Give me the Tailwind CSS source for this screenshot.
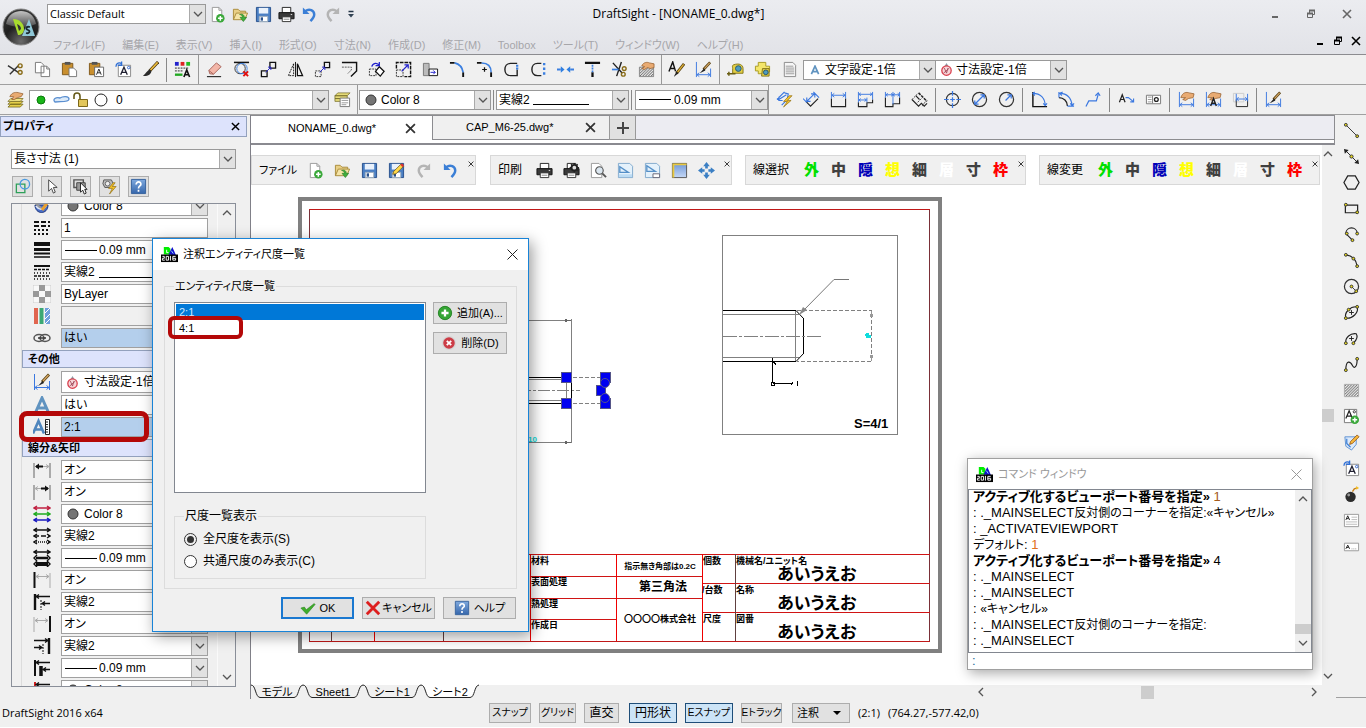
<!DOCTYPE html>
<html lang="ja">
<head>
    <meta charset="UTF-8">
    <meta name="viewport" content="width=device-width, initial-scale=1.0">
    <title>DraftSight - [NONAME_0.dwg*]</title>
    <script src="https://cdn.jsdelivr.net/npm/@tailwindcss/browser@4"></script>
</head>
<body class="bg-[#f0f0f0] font-['Liberation_Sans','Noto_Sans_CJK_JP',sans-serif] text-xs text-black [font-feature-settings:'palt']">

<!-- Icon sprite -->
<svg class="absolute size-0" aria-hidden="true">
    <defs>
        <linearGradient id="gBlue" x2="0" y2="1"><stop offset="0" stop-color="#7fa9de"/><stop offset="1" stop-color="#3566ab"/></linearGradient>
        <linearGradient id="gSky" x2="0" y2="1"><stop offset="0" stop-color="#6f97d8"/><stop offset="1" stop-color="#c5d8f5"/></linearGradient>
        <radialGradient id="gOrb" cx=".5" cy=".9" r=".9"><stop offset="0" stop-color="#6b6b6b"/><stop offset=".5" stop-color="#1f1f1f"/><stop offset="1" stop-color="#3a3a3a"/></radialGradient>
        <linearGradient id="gShine" x2="0" y2="1"><stop offset="0" stop-color="#c4c4c4"/><stop offset="1" stop-color="#4a4a4a"/></linearGradient>
        <pattern id="pHatch" width="3" height="3" patternUnits="userSpaceOnUse"><path d="M0 3L3 0" stroke="#444"/></pattern>
    </defs>
    <symbol id="chev" viewBox="0 0 10 10"><path d="M1 3l4 4 4-4" fill="none" stroke="#555" stroke-width="1.3"/></symbol>
    <symbol id="x" viewBox="0 0 10 10"><path d="M1 1l8 8M9 1l-8 8" fill="none" stroke="currentColor" stroke-width="1.6"/></symbol>
    <symbol id="min" viewBox="0 0 10 10"><path d="M2 8h6" stroke="currentColor" stroke-width="2"/></symbol>
    <symbol id="restore" viewBox="0 0 10 10"><path d="M1.500 4.500h5v4h-5zM3.500 4V1.500h5v4H7" fill="none" stroke="currentColor"/><path d="M1 4.500h6M3 1.500h6" stroke="currentColor" stroke-width="2"/></symbol>
    <symbol id="orb" viewBox="0 0 38 38"><circle cx="19" cy="19" r="18" fill="url(#gOrb)" stroke="#888"/><path d="M4 16C6 6 13 3 19 3s13 3 15 13c-9 4-21 4-30 0z" fill="url(#gShine)"/><path d="M11 11c7 0 11 5 11 10 0 4-3 6-6 6z" fill="#a8dc2e"/><path d="M15 16c3 1 4 3 4 5l-2 2z" fill="#333"/><path d="M20 28l7-17 6 17z" fill="#8fc8d8"/><path d="M28 19c-4-1-5 2-2 3s1 4-2 3" fill="none" stroke="#1c2a30" stroke-width="1.8"/></symbol>
    <symbol id="ds16" viewBox="0 0 18 18"><path d="M3 1h5l2 2v6H3z" fill="#0e0"/><path d="M6 4v3h2" fill="none" stroke="#fff"/><path d="M8 9l4-8 4 9z" fill="#11c"/><path d="M11 5l2 3" stroke="#9df"/><path d="M0 9h18v8H0z" fill="#000"/><path d="M1.500 11h2v2h-2v2h2.500M5.500 11h2.500v4H5.500zM10 10.500v5M15.500 11h-3v4h3v-2h-3" fill="none" stroke="#fff"/></symbol>

    <!-- file -->
    <symbol id="new" viewBox="0 0 18 18"><path d="M3.500 1.500h7l3 3v12h-10z" fill="#fff" stroke="#999"/><path d="M10.500 1.500v3h3" fill="none" stroke="#999"/><circle cx="12" cy="13" r="4.500" fill="#3aa83a"/><path d="M12 10.500v5M9.500 13h5" stroke="#fff" stroke-width="1.600"/></symbol>
    <symbol id="open" viewBox="0 0 18 18"><path d="M1.500 14.500v-11h5l2 2h6v3" fill="#e8cf86" stroke="#a98b3a"/><path d="M1.500 14.500l3-7h12l-3 7z" fill="#f5e4a8" stroke="#a98b3a"/><path d="M8 9c3-1 5 0 5 3h2.500L12 16.500 8.500 12H11c0-2-1-2.500-3-3z" fill="#3fae3f" stroke="#1f7a1f" stroke-width=".6"/></symbol>
    <symbol id="save" viewBox="0 0 18 18"><path d="M1.500 1.500h15v15h-15z" fill="#4a7fc4" stroke="#27508c"/><path d="M4 2h10v6H4z" fill="#e9f1fb"/><path d="M4.500 11h9v5.500h-9z" fill="#fff" stroke="#9ab"/><path d="M6 12h2.500v3.500H6z" fill="#27508c"/></symbol>
    <symbol id="saveas" viewBox="0 0 18 18"><use href="#save"/><path d="M5 13l1-3 8-8 2.500 2.500-8 8z" fill="#ffd84a" stroke="#6b5410" stroke-width=".8"/><path d="M13 3l2.500 2.500 1.500-2-2-2z" fill="#d33"/></symbol>
    <symbol id="print" viewBox="0 0 18 18"><path d="M4.500 1.500h9v6h-9z" fill="#fff" stroke="#222"/><path d="M1 7h16v6.500H1z" fill="#3a3a3a" stroke="#111"/><path d="M4.500 11.500h9v5h-9z" fill="#fff" stroke="#333"/><path d="M6 14h6" stroke="#888"/><path d="M13.500 9h1.500" stroke="#ddd"/></symbol>
    <symbol id="printcfg" viewBox="0 0 18 18"><use href="#print"/><circle cx="12" cy="6" r="3" fill="#ddd" stroke="#222" stroke-width="2"/><path d="M12 1v2M12 9v2M7 6h2M15 6h2M8.500 2.500L10 4M14 8l1.500 1.500M15.500 2.500L14 4" stroke="#222" stroke-width="1.500"/></symbol>
    <symbol id="preview" viewBox="0 0 18 18"><path d="M1.500 1.500h8l3 3v12h-11z" fill="#fff" stroke="#999"/><circle cx="10" cy="9" r="4" fill="#dbe6ef" stroke="#555" stroke-width="1.200"/><path d="M13 12l4 4" stroke="#555" stroke-width="2"/></symbol>
    <symbol id="undo" viewBox="0 0 18 18"><path d="M4.500 5.500C9 2 14 5 14 9c0 3-2 5-4 7" fill="none" stroke="#3b7fd6" stroke-width="2.600"/><path d="M2 1.500v7h7z" fill="#3b7fd6"/></symbol>
    <symbol id="redo" viewBox="0 0 18 18"><path d="M13.500 5.500C9 2 4 5 4 9c0 3 2 5 4 7" fill="none" stroke="#b4b4b4" stroke-width="2.600"/><path d="M16 1.500v7H9z" fill="#b4b4b4"/></symbol>
    <symbol id="more" viewBox="0 0 10 10"><path d="M2.500 2.500h5" stroke="#234" stroke-width="1.500"/><path d="M2 5h6L5 8.500z" fill="#345"/></symbol>
    <symbol id="layout1" viewBox="0 0 18 18"><path d="M1.500 1.500h12l3 3v12h-15z" fill="#e4f1fb" stroke="#7fa9cc"/><path d="M3 5v6h9z" fill="none" stroke="#5590c8" stroke-width="1.400"/><path d="M2 13h14v3H2z" fill="#bcdcf4"/></symbol>
    <symbol id="layout2" viewBox="0 0 18 18"><path d="M1.500 1.500h12l3 3v12h-15z" fill="#e4f1fb" stroke="#7fa9cc"/><path d="M3 4v6h9z" fill="none" stroke="#5590c8" stroke-width="1.400"/><path d="M9.500 12.500h7v4h-7z" fill="#fff" stroke="#667"/></symbol>
    <symbol id="viewbox" viewBox="0 0 18 18"><path d="M1.500 1.500h15v15h-15z" fill="url(#gSky)" stroke="#555"/><path d="M16.500 2.500h-14v14" fill="none" stroke="#e8c840" stroke-width="2"/></symbol>
    <symbol id="pan" viewBox="0 0 18 18"><path d="M9 0l3.500 4.500h-7zM9 18l3.500-4.500h-7zM0 9l4.500-3.500v7zM18 9l-4.500-3.500v7z" fill="#3b7fc4"/><path d="M9 4v3M9 11v3M4 9h3M11 9h3" stroke="#3b7fc4" stroke-width="2.800"/></symbol>

    <!-- edit -->
    <symbol id="cut" viewBox="0 0 18 18"><path d="M1 5l11 7M3 14l9-9" stroke="#333" stroke-width="1.500"/><circle cx="14" cy="5" r="2" fill="none" stroke="#8a6d1a" stroke-width="1.500"/><circle cx="14" cy="12" r="2" fill="none" stroke="#8a6d1a" stroke-width="1.500"/></symbol>
    <symbol id="copy" viewBox="0 0 18 18"><path d="M1.500 1.500h6l3 3v8h-9zM7.500 5.500h6l3 3v8h-9z" fill="#fff" stroke="#777"/><path d="M13.500 5.500v3h3" fill="none" stroke="#777"/></symbol>
    <symbol id="paste" viewBox="0 0 18 18"><path d="M1.500 2.500h11v12h-11z" fill="#c98f2e" stroke="#80581a"/><path d="M4 1h6v3H4z" fill="#555"/><path d="M8.500 7.500h5l3 3v6h-8z" fill="#fff" stroke="#777"/></symbol>
    <symbol id="pastesp" viewBox="0 0 18 18"><path d="M1.500 2.500h11v12h-11z" fill="#c98f2e" stroke="#80581a"/><path d="M4 1h6v3H4z" fill="#555"/><path d="M7 6.500h9.500v10H7z" fill="#fff" stroke="#666"/><path d="M9 14.500l2.500-6 2.500 6M10 12.500h3" fill="none" stroke="#222"/></symbol>
    <symbol id="note" viewBox="0 0 18 18"><path d="M3.500 4.500h13v12h-13z" fill="#fff" stroke="#888"/><path d="M6 14.500l3.500-8 3.500 8M7 12h5" fill="none" stroke="#223" stroke-width="1.400"/><circle cx="14.500" cy="7" r="1.300" fill="none" stroke="#36c"/><path d="M1 6c0-4 4-5 6-3M7 .5v4H3" fill="none" stroke="#2f6fd6" stroke-width="1.400"/></symbol>
    <symbol id="brush" viewBox="0 0 18 18"><path d="M17 1L8 10.500" stroke="#4a3510" stroke-width="3.200"/><path d="M16.500 1.500L9 9.500" stroke="#edbd3c" stroke-width="1.700"/><path d="M8 9c-2 1-4 4-7 7 4 0 8-1 9-5z" fill="#2b2b2b"/></symbol>
    <symbol id="props" viewBox="0 0 18 18"><path d="M1 1h4v4H1z" fill="#22c"/><path d="M7 1h4v4H7z" fill="#d22"/><path d="M13 1h4v4h-4z" fill="#2b2"/><path d="M1 7.500h15M1 10.500h9" stroke="#222" stroke-dasharray="2 1"/><path d="M1 14.500h8" stroke="#2a2" stroke-width="2.500"/><path d="M10.500 17L13.500 9.500 16.500 17M11.500 14.500h4" fill="none" stroke="#111" stroke-width="1.700"/></symbol>
    <symbol id="erase" viewBox="0 0 18 18"><path d="M3 10l8-8 5 4-8 8-4-.5z" fill="#f3b6a8" stroke="#a8645a"/><path d="M3 10l5 4" stroke="#a8645a"/><path d="M1 16.500h15" stroke="#333" stroke-width="1.300"/></symbol>
    <symbol id="dedup" viewBox="0 0 18 18"><path d="M1 1.500h16" stroke="#111" stroke-width="1.600"/><circle cx="7.500" cy="8" r="5.500" fill="none" stroke="#333"/><circle cx="9.500" cy="8" r="5.500" fill="none" stroke="#3b7fe0"/><path d="M11 11l5 5M16 11l-5 5" stroke="#e01010" stroke-width="2"/></symbol>
    <symbol id="copyent" viewBox="0 0 18 18"><path d="M1.500 10.500h6v6h-6zM10.500 1.500h6v6h-6z" fill="none" stroke="#111" stroke-width="1.400"/><path d="M6 12l5-5M8.500 6.500h3v3" fill="none" stroke="#22c"/></symbol>
    <symbol id="mirror" viewBox="0 0 18 18"><path d="M9 1v16" stroke="#111"/><path d="M7 3v12.500H1.500z" fill="none" stroke="#111" stroke-dasharray="2 1"/><path d="M11 3v12.500h5.500z" fill="none" stroke="#111" stroke-width="1.300"/></symbol>
    <symbol id="move" viewBox="0 0 18 18"><path d="M1.500 10.500h6v6h-6z" fill="none" stroke="#333" stroke-dasharray="2 1"/><path d="M11 1.500h5.500v5.500H11z" fill="none" stroke="#111" stroke-width="1.400"/><path d="M6 12l5-5M8.500 6.500h3v3" fill="none" stroke="#22c"/></symbol>
    <symbol id="offset" viewBox="0 0 18 18"><path d="M1 1.500h15.500v9l-6 6" fill="none" stroke="#111" stroke-width="1.500"/><path d="M1 6.500h10v3l-4 4" fill="none" stroke="#555" stroke-dasharray="2 1"/></symbol>
    <symbol id="rotate" viewBox="0 0 18 18"><path d="M1.500 8.500h7v7h-7z" fill="none" stroke="#333" stroke-dasharray="2 1"/><path d="M12 6l5 5-4 5-5-5z" fill="#fff" stroke="#111" stroke-width="1.400"/><path d="M4 6c1-4 6-5 8-1M12 1v4H8" fill="none" stroke="#22c" stroke-width="1.300"/></symbol>
    <symbol id="scale" viewBox="0 0 18 18"><path d="M1.500 8V1.500h15v15H10" fill="none" stroke="#111" stroke-width="1.500" stroke-dasharray="4 1"/><path d="M1.500 9.500h7v7h-7z" fill="none" stroke="#333" stroke-dasharray="2 1"/><path d="M7 11l7-7M10 4h4v4" fill="none" stroke="#22c" stroke-width="1.300"/></symbol>
    <symbol id="stretch" viewBox="0 0 18 18"><path d="M1.500 2.500h6v13h-6z" fill="#bbb" stroke="#777"/><path d="M7.500 8.500h9v7h-9z" fill="#fff" stroke="#111"/><path d="M9 12h5M12 10l2 2-2 2" fill="none" stroke="#22c"/></symbol>
    <symbol id="chamfer" viewBox="0 0 18 18"><path d="M1 2h5M15 12v5" stroke="#111" stroke-width="2"/><path d="M6 2c4 1 8 4 9 10" fill="none" stroke="#3b7fe0" stroke-width="1.800"/></symbol>
    <symbol id="fillet" viewBox="0 0 18 18"><path d="M1 2h5M16 12v5" stroke="#111" stroke-width="2"/><path d="M6 2c7 0 10 4 10 10" fill="none" stroke="#3b7fe0" stroke-width="1.600"/><path d="M9 6.500v5M6.500 9h5" stroke="#111" stroke-width="1.300"/></symbol>
    <symbol id="pedit" viewBox="0 0 18 18"><path d="M15 2.500H8c-8 0-8 13 0 13h7V9" fill="none" stroke="#222" stroke-width="1.500"/><path d="M15 4v5" stroke="#3b7fe0" stroke-width="2.400" stroke-dasharray="2 1"/></symbol>
    <symbol id="pedit2" viewBox="0 0 18 18"><path d="M12 2.500H8c-8 0-8 13 0 13h4" fill="none" stroke="#222" stroke-width="1.500"/><path d="M15 2v14" stroke="#3b7fe0" stroke-width="2.500" stroke-dasharray="2.500 2.500"/></symbol>
    <symbol id="join" viewBox="0 0 18 18"><path d="M0 9h4M14 9h4" stroke="#3b7fe0" stroke-width="2"/><path d="M4 5.500L8 9l-4 3.500zM14 5.500L10 9l4 3.500z" fill="#2f7fe0"/></symbol>
    <symbol id="extend" viewBox="0 0 18 18"><path d="M1 2h16M9 12v5" stroke="#111" stroke-width="2.400"/><path d="M9 4v8" stroke="#3b7fe0" stroke-width="1.800" stroke-dasharray="2 1"/></symbol>
    <symbol id="trim" viewBox="0 0 18 18"><path d="M2 2l10 11M11 1L6 16" stroke="#222" stroke-width="1.500"/><path d="M1 9h7" stroke="#3b7fe0" stroke-width="1.800"/><circle cx="14" cy="8" r="2" fill="none" stroke="#8a6d1a" stroke-width="1.500"/><circle cx="13" cy="14" r="2" fill="none" stroke="#8a6d1a" stroke-width="1.500"/></symbol>
    <symbol id="hatchedit" viewBox="0 0 18 18"><path d="M1.500 6.500h15v10h-15z" fill="url(#pHatch)" stroke="#888"/><path d="M4 5c2-4 6-4 8-3l5 1v4l-4 1-3-1-3 2-3-1 3-2z" fill="#e9ab72" stroke="#96602f" stroke-width=".8"/></symbol>
    <symbol id="tstyle" viewBox="0 0 18 18"><path d="M1 11L5 1l3 10M2.500 8h5" fill="none" stroke="#111" stroke-width="1.500"/><path d="M17 3L9 13" stroke="#5a4310" stroke-width="3"/><path d="M16.500 3.500L10 12" stroke="#e4b436" stroke-width="1.300"/><path d="M9 11l2 2-5 4z" fill="#222"/></symbol>
    <symbol id="dimstyle" viewBox="0 0 18 18"><path d="M1.500 1v16M16.500 8v9M2 14.500h14M4.500 12.500l-2.500 2 2.500 2M13.500 12.500l2.500 2-2.500 2" fill="none" stroke="#3b78e0"/><path d="M16 1.500L9 9" stroke="#5a4310" stroke-width="2.800"/><path d="M15.500 2L10 8" stroke="#d8a868" stroke-width="1.200"/><path d="M9.500 8l1.500 2-6 3z" fill="#222"/></symbol>
    <symbol id="tape" viewBox="0 0 18 18"><path d="M7 4c6-2 10 0 10 4v5H6V8c0-2-1-3 1-4z" fill="#e3cf45" stroke="#857618"/><circle cx="12" cy="8" r="3" fill="#4d9cbf" stroke="#27566e"/><path d="M0 13.500h9M2 11.500v4" stroke="#6b5f14" stroke-width="1.600"/></symbol>
    <symbol id="area" viewBox="0 0 18 18"><path d="M4.500 1.500h8v4h4v6h-5v2h-7v-3h-3v-5h3z" fill="#f4e66a" stroke="#a89a20"/><path d="M9 8h7v8H8z" fill="#e3cf45" stroke="#857618"/><circle cx="12.500" cy="12" r="2.500" fill="#4d9cbf" stroke="#27566e"/></symbol>
    <symbol id="sheet" viewBox="0 0 18 18"><path d="M3.500 1.500h9l3 3v12h-12z" fill="#f6f6f6" stroke="#888"/><path d="M5 5.500h8M5 7.500h9M5 9.500h9M5 11.500h9M5 13.500h9" stroke="#999"/></symbol>
    <symbol id="bigA" viewBox="0 0 18 18"><path d="M2.500 16.500L9 2l6.500 14.500M5 12h8" fill="none" stroke="#6093c0" stroke-width="3"/></symbol>
    <symbol id="dimred" viewBox="0 0 18 18"><path d="M9 0l2.500 4L9 7 6.500 4z" fill="#8a9aa5"/><circle cx="9" cy="10.500" r="6.500" fill="#f7d5d8" stroke="#d9404e" stroke-width="1.800"/><path d="M5 14l8-7M6 7l3 7 2-7" stroke="#a04858" fill="none" stroke-width="1.200"/></symbol>

    <!-- layers -->
    <symbol id="layer" viewBox="0 0 18 18"><path d="M4 11h13l-3 3H1zM4 14h13l-3 3H1z" fill="#e6d04a" stroke="#6f6416" stroke-width=".8"/><path d="M4 8h13l-3 3H1z" fill="#f7ea8a" stroke="#6f6416" stroke-width=".8"/><path d="M3 6c2-5 7-5 10-4l4 1-2 3-4 1-3 2-3 0 2-3z" fill="#e9ab72" stroke="#96602f" stroke-width=".8"/></symbol>
    <symbol id="layerst" viewBox="0 0 18 18"><path d="M4 2h13l-3 3H1zM1 5h13v3H1zM1 8h13v3H1z" fill="#e6dc7a" stroke="#77702c" stroke-width=".8"/><path d="M6.500 7.500h10v9h-10z" fill="#fff" stroke="#777"/><path d="M8 10h7M8 12.500h7M8 14.500h5" stroke="#999"/></symbol>
    <symbol id="on" viewBox="0 0 18 18"><circle cx="9" cy="9" r="4" fill="#19b519" stroke="#0c7a0c"/></symbol>
    <symbol id="thaw" viewBox="0 0 18 18"><path d="M3 11c-3-3 1-5 5-4 3-2 9-2 9 1 0 4-10 2-14 3z" fill="#dbeaf9" stroke="#5b8fd0" stroke-width="1.300"/></symbol>
    <symbol id="lock" viewBox="0 0 18 18"><path d="M2 8V5c0-4 6-4 6 0v4" fill="none" stroke="#665a1a" stroke-width="1.600"/><path d="M6.500 8.500h9v7h-9z" fill="#e2c65a" stroke="#7c6719"/></symbol>
    <symbol id="ring" viewBox="0 0 18 18"><circle cx="9" cy="9" r="6" fill="#fff" stroke="#222"/></symbol>
    <symbol id="grey" viewBox="0 0 18 18"><circle cx="9" cy="9" r="5" fill="#757575" stroke="#333"/></symbol>

    <!-- dimensions -->
    <symbol id="dsmart" viewBox="0 0 18 18"><path d="M1 9l8-8M6 15l9-9M3 9l8-5M3 6v4h4M12 8l1-5-4-1" fill="none" stroke="#3b78e0" stroke-width="1.200"/><path d="M14 5l-6 6h4l-4 6 8-7h-4l5-5z" fill="#f5c228" stroke="#8d6b0c" stroke-width=".7"/></symbol>
    <symbol id="dalign" viewBox="0 0 18 18"><path d="M3 11l5 5 8-8" fill="none" stroke="#222" stroke-width="1.200"/><path d="M4 11l8-8M4 7v4h4M8.500 3h4v4M0 8l4 4M11 1l6 6" fill="none" stroke="#3b78e0" stroke-width="1.200"/></symbol>
    <symbol id="dlin" viewBox="0 0 18 18"><path d="M1.500 8v8.500h15V8" fill="none" stroke="#222" stroke-width="1.200"/><path d="M1.500 1v7M16.500 1v7M2 4.500h14M4.500 2.500l-2.500 2 2.500 2M13.500 2.500l2.500 2-2.500 2" fill="none" stroke="#3b78e0"/></symbol>
    <symbol id="dbase" viewBox="0 0 18 18"><path d="M1.500 12v4.500h9v-4h6V9" fill="none" stroke="#222" stroke-width="1.200"/><path d="M1.500 1v11M16.500 1v8M2 3.500h14M4 2L2 3.500 4 5M14 2l2 1.500L14 5M10.500 7v5M2 9.500h8M4 8L2 9.500 4 11M8 8l2 1.500L8 11" fill="none" stroke="#3b78e0"/></symbol>
    <symbol id="dcont" viewBox="0 0 18 18"><path d="M1.500 7v9.500h8v-3h7V7" fill="none" stroke="#222" stroke-width="1.200"/><path d="M1.500 1v6M9.500 1v13M16.500 1v6M2 4h14M4 2.500L2 4l2 1.500M7.500 2.500l2 1.500-2 1.500M11.500 2.500L9.500 4l2 1.500M14.500 2.500l2 1.500-2 1.500" fill="none" stroke="#3b78e0"/></symbol>
    <symbol id="djog" viewBox="0 0 18 18"><path d="M1 9l7 7 3-3 3 3 3-3M5 5l4 4" fill="none" stroke="#222" stroke-width="1.200"/><path d="M8 2l9 9" stroke="#222" stroke-width="1.600" stroke-dasharray="3 1"/><path d="M1 9l6-6M7 12l5-5M12 16l4-6" stroke="#444" stroke-dasharray="2 1"/></symbol>
    <symbol id="dcen" viewBox="0 0 18 18"><circle cx="9" cy="9" r="6.500" fill="none" stroke="#333" stroke-width="1.300"/><path d="M9 0v5M9 13v5M0 9h5M13 9h5M6.500 9h5M9 6.500v5" stroke="#3b78e0" stroke-width="1.300"/></symbol>
    <symbol id="ddia" viewBox="0 0 18 18"><circle cx="9" cy="9" r="7.500" fill="none" stroke="#333" stroke-width="1.300"/><path d="M4 14L14 4M4 10v4h4M10 4h4v4" fill="none" stroke="#3b78e0" stroke-width="1.300"/></symbol>
    <symbol id="drad" viewBox="0 0 18 18"><circle cx="9" cy="9" r="7.500" fill="none" stroke="#333" stroke-width="1.300"/><path d="M8 10l6-6M10 4h4v4" fill="none" stroke="#3b78e0" stroke-width="1.300"/></symbol>
    <symbol id="dang" viewBox="0 0 18 18"><path d="M2 1v15.500h15" fill="none" stroke="#111" stroke-width="1.500"/><path d="M2 2.500c8 0 13 5 13 13M4 1L2 2.500 4 5M13 13l2 2.500 2-2.500" fill="none" stroke="#3b78e0" stroke-width="1.200"/></symbol>
    <symbol id="darc" viewBox="0 0 18 18"><path d="M1 7c5 0 9 4 9 9" fill="none" stroke="#222" stroke-width="1.400"/><path d="M1 1v6M10 16h7M2 2.500c8 0 12 5 13 13M5 1L2 2.500 4 5M13 13l2 2.500 2-2.500" fill="none" stroke="#3b78e0" stroke-width="1.200"/></symbol>
    <symbol id="dord" viewBox="0 0 18 18"><path d="M1 16.500l3-6h8l2-7M11 5l3-3 2 3" fill="none" stroke="#3b78e0" stroke-width="1.300"/></symbol>
    <symbol id="dlead" viewBox="0 0 18 18"><path d="M1.500 12l3-8 3 8M2.500 9h4" fill="none" stroke="#222" stroke-width="1.300"/><path d="M8 7h3l5 4M13 11.500h3.500V8" fill="none" stroke="#3b78e0" stroke-width="1.200"/></symbol>
    <symbol id="dtol" viewBox="0 0 18 18"><path d="M1.500 4.500h15v9h-15zM8 5v8" fill="#fff" stroke="#777"/><path d="M3 6.500h4M3 9h4M3 11.500h4" stroke="#999"/><circle cx="12" cy="9" r="2" fill="none" stroke="#222" stroke-width="1.400"/></symbol>
    <symbol id="dedit1" viewBox="0 0 18 18"><path d="M1.500 1v16M16.500 8v9M2 14.500h14M4.500 12.500l-2.500 2 2.500 2M13.500 12.500l2.500 2-2.500 2" fill="none" stroke="#3b78e0"/><path d="M3 7c2-6 6-6 9-5l5 1-1 4-5 1-3 2-3-1 3-2z" fill="#e9ab72" stroke="#96602f" stroke-width=".8"/></symbol>
    <symbol id="dedit2" viewBox="0 0 18 18"><use href="#dedit1"/><path d="M6 16l3-8 3 8M7 13h4" fill="none" stroke="#222" stroke-width="1.500"/></symbol>
    <symbol id="dedit3" viewBox="0 0 18 18"><path d="M1.500 2.500h11v9h-11z" fill="none" stroke="#ccc"/><path d="M4.500 9v7.500h12V9" fill="none" stroke="#222"/><path d="M4.500 3v8M16.500 3v8M5 8.500h11M7 6.500l-2 2 2 2M14 6.500l2 2-2 2" fill="none" stroke="#3b78e0"/></symbol>

    <!-- draw -->
    <symbol id="line" viewBox="0 0 18 18"><path d="M3 3l12 12" stroke="#333"/><g fill="#e8d820" stroke="#333"><circle cx="3" cy="3" r="1.500"/><circle cx="15" cy="15" r="1.500"/></g></symbol>
    <symbol id="xline" viewBox="0 0 18 18"><path d="M2 2l14 14" stroke="#222"/><path d="M1 1l5 1-4 4zM17 17l-5-1 4-4z" fill="#222"/><circle cx="9" cy="9" r="1.700" fill="#e8d820" stroke="#333"/></symbol>
    <symbol id="poly" viewBox="0 0 18 18"><path d="M5 2h8l4 7-4 7H5L1 9z" fill="none" stroke="#222" stroke-width="1.300"/></symbol>
    <symbol id="rect" viewBox="0 0 18 18"><path d="M2.500 5.500h13v8h-13z" fill="none" stroke="#222" stroke-width="1.300"/><g fill="#e8d820" stroke="#333"><circle cx="3" cy="5" r="1.500"/><circle cx="15" cy="13" r="1.500"/></g></symbol>
    <symbol id="pline" viewBox="0 0 18 18"><path d="M15 8c0-8-12-8-12 0l7 7" fill="none" stroke="#222" stroke-width="1.200"/><g fill="#e8d820" stroke="#333"><circle cx="4" cy="8" r="1.500"/><circle cx="15" cy="8" r="1.500"/><circle cx="10" cy="15" r="1.500"/></g></symbol>
    <symbol id="arc" viewBox="0 0 18 18"><path d="M3 3c8 1 11 5 12 12" fill="none" stroke="#222" stroke-width="1.200"/><g fill="#e8d820" stroke="#333"><circle cx="3" cy="3" r="1.500"/><circle cx="11" cy="7" r="1.500"/><circle cx="15" cy="15" r="1.500"/></g></symbol>
    <symbol id="circ" viewBox="0 0 18 18"><circle cx="9" cy="9" r="7.500" fill="none" stroke="#333" stroke-width="1.300"/><path d="M9 9l5 5" stroke="#333"/><g fill="#e8d820" stroke="#333"><circle cx="9" cy="9" r="1.500"/><circle cx="14" cy="14" r="1.500"/></g></symbol>
    <symbol id="ell" viewBox="0 0 18 18"><path d="M3 15C1 9 8 2 15 3c2 6-5 13-12 12z" fill="none" stroke="#222" stroke-width="1.200"/><path d="M9 6.500v5M6.500 9h5" stroke="#222"/><g fill="#e8d820" stroke="#333"><circle cx="3" cy="15" r="1.500"/><circle cx="15" cy="3" r="1.500"/><circle cx="6" cy="6" r="1.500"/></g></symbol>
    <symbol id="ellarc" viewBox="0 0 18 18"><path d="M3 14C2 8 8 3 14 4c2 3 0 7-3 10" fill="none" stroke="#222" stroke-width="1.200"/><path d="M9 6.500v5M6.500 9h5" stroke="#222"/><g fill="#e8d820" stroke="#333"><circle cx="3" cy="14" r="1.500"/><circle cx="11" cy="14" r="1.500"/></g></symbol>
    <symbol id="spline" viewBox="0 0 18 18"><path d="M3 15c0-12 5-9 7-5s5 2 5-7" fill="none" stroke="#222" stroke-width="1.200"/><g fill="#e8d820" stroke="#333"><circle cx="3" cy="15" r="1.500"/><circle cx="15" cy="3" r="1.500"/></g></symbol>
    <symbol id="hatch" viewBox="0 0 18 18"><path d="M1.500 2.500h15v13h-15z" fill="url(#pHatch)" stroke="#aaa"/></symbol>
    <symbol id="addnote" viewBox="0 0 18 18"><path d="M1.500 1.500h13v14h-13z" fill="#fff" stroke="#777"/><path d="M3 11l3.500-8L10 11M4 8.500h5" fill="none" stroke="#222" stroke-width="1.300"/><circle cx="12" cy="4" r="1.200" fill="none" stroke="#333"/><circle cx="12.500" cy="12.500" r="4.500" fill="#3aa83a"/><path d="M12.500 10v5M10 12.500h5" stroke="#fff" stroke-width="1.500"/></symbol>
    <symbol id="editnote" viewBox="0 0 18 18"><path d="M2 3h12v8l-5 6-6-4z" fill="#dceafb" stroke="#5b8fd0"/><path d="M4 5v5l4 4" fill="none" stroke="#3b7fd6" stroke-width="1.300"/><path d="M7 11l1-3 7-7 2 2-7 7z" fill="#f8b83a" stroke="#8a4a10" stroke-width=".8"/></symbol>
    <symbol id="bomb" viewBox="0 0 18 18"><circle cx="8" cy="11.500" r="5.500" fill="#2c2c2c"/><circle cx="6" cy="9.500" r="1.500" fill="#999"/><path d="M10 6l2-3 3-1" fill="none" stroke="#c9821a" stroke-width="1.500"/><path d="M14 0l3 2-3 2z" fill="#f4c020"/></symbol>
    <symbol id="mtext" viewBox="0 0 18 18"><path d="M1.500 2.500h15v13h-15z" fill="#fff" stroke="#999"/><path d="M3 8.500L5 4l2 4.500M4 7h2" fill="none" stroke="#222"/><path d="M9 5.500h6M9 8h6M3 10.500h12M3 13h12" stroke="#bbb"/></symbol>
    <symbol id="stext" viewBox="0 0 18 18"><path d="M1.500 5.500h15v8h-15z" fill="#fff" stroke="#999"/><path d="M3 11.500L5 7.500l2 4M4 10h2" fill="none" stroke="#222"/><path d="M9 11.500h6" stroke="#999" stroke-dasharray="1 1"/></symbol>

    <!-- property palette -->
    <symbol id="shapes" viewBox="0 0 18 18"><path d="M2.500 6.500h9v9h-9z" fill="none" stroke="#2fa05a" stroke-width="1.400"/><circle cx="11.500" cy="6.500" r="5" fill="none" stroke="#4b9ae0" stroke-width="1.400"/></symbol>
    <symbol id="cursor" viewBox="0 0 18 18"><path d="M6 2v12l3-3 2 5 2-1-2-5h4z" fill="#fff" stroke="#444"/></symbol>
    <symbol id="selwin" viewBox="0 0 18 18"><path d="M2 2h10v8H2z" fill="#ddd" stroke="#555" stroke-width="1.500"/><path d="M5 5h9v8H5z" fill="#999" stroke="#444"/><path d="M9 5v10l2.500-2 1.500 4 2-1-1.500-4H16z" fill="#fff" stroke="#222"/></symbol>
    <symbol id="quick" viewBox="0 0 18 18"><path d="M3 2h8l2 4-2 4H4L2 6z" fill="#bbb" stroke="#555"/><circle cx="7" cy="6" r="2.500" fill="#eee" stroke="#666"/><path d="M13 5l-5 6h4l-3 6 7-8h-4l3-4z" fill="#f5c228" stroke="#8d6b0c" stroke-width=".7"/></symbol>
    <symbol id="help" viewBox="0 0 18 18"><path d="M1.500 1.500h15v15h-15z" fill="url(#gBlue)" stroke="#34619c"/><path d="M6.500 7c0-4 5.500-3.500 5 0-.3 1.500-2.500 1.500-2.500 4M9 12.500v2" fill="none" stroke="#fff" stroke-width="1.800"/></symbol>
    <symbol id="pcolor" viewBox="0 0 18 18"><path d="M2 8h13c0 10-13 10-13 0z" fill="#4a6fc8" stroke="#223a80"/><path d="M3 9c3 4 7 4 10 0" fill="none" stroke="#dfe6f4" stroke-width="2"/><path d="M17 2L9 13" stroke="#e8a030" stroke-width="3"/><path d="M2 6l6 5" stroke="#999" stroke-width="2"/></symbol>
    <symbol id="pltscale" viewBox="0 0 18 18"><path d="M1 3h16M1 7h16" stroke="#111" stroke-width="2" stroke-dasharray="5 2"/><path d="M1 11h16M1 15h16" stroke="#111" stroke-width="2" stroke-dasharray="2 2"/></symbol>
    <symbol id="plw" viewBox="0 0 18 18"><path d="M1 3h16" stroke="#111" stroke-width="4"/><path d="M1 8.500h16" stroke="#111" stroke-width="3"/><path d="M1 12.500h16" stroke="#111" stroke-width="2"/><path d="M1 16h16" stroke="#111" stroke-width="1.500"/></symbol>
    <symbol id="plt" viewBox="0 0 18 18"><path d="M1 3h16" stroke="#111" stroke-width="2"/><path d="M1 6.500h16M1 13h16" stroke="#111" stroke-width="1.500" stroke-dasharray="3 1"/><path d="M1 10h16M1 16h16" stroke="#111" stroke-width="1.500" stroke-dasharray="1 2"/></symbol>
    <symbol id="ptrans" viewBox="0 0 18 18"><path d="M0 0h18v18H0z" fill="#f8f8f8" stroke="#ccc"/><path d="M6 0h6v6H6zM0 6h6v6H0zM12 6h6v6h-6zM6 12h6v6H6z" fill="#999"/></symbol>
    <symbol id="pps" viewBox="0 0 18 18"><path d="M1 1h4v16H1z" fill="#e0654f"/><path d="M6.500 1h4v16h-4z" fill="#3aa874"/><path d="M12 1h5v16h-5z" fill="#6f9fdc"/><path d="M12 6l5-5M12 12l5-5M12 17l5-5" stroke="#fff"/></symbol>
    <symbol id="plink" viewBox="0 0 18 18"><ellipse cx="6" cy="9" rx="5" ry="3.500" fill="none" stroke="#555" stroke-width="1.500"/><ellipse cx="12" cy="9" rx="5" ry="3.500" fill="none" stroke="#555" stroke-width="1.500"/><path d="M5 9h8" stroke="#333" stroke-width="1.500"/></symbol>
    <symbol id="pscale" viewBox="0 0 18 18"><path d="M0 15.500L5.500 3 11 15.500M2 11.500h7" fill="none" stroke="#4f86bd" stroke-width="2.600"/><path d="M12.500 1.500h4v15h-4z" fill="#fff" stroke="#222"/><path d="M13 4h2M13 6.500h2M13 9h2M13 11.500h2M13 14h2" stroke="#222"/></symbol>
    <symbol id="pd1" viewBox="0 0 18 18"><path d="M1 2v15M17 2v15" stroke="#aaa" stroke-width="2"/><path d="M9 5.500h7M13 3.500l3 2-3 2" fill="none" stroke="#aaa"/><path d="M3 5.500h7" stroke="#111" stroke-width="2"/><path d="M2 5.500l4-3v6z" fill="#111"/></symbol>
    <symbol id="pd2" viewBox="0 0 18 18"><path d="M1 2v15M17 2v15" stroke="#aaa" stroke-width="2"/><path d="M2 5.500h7M5 3.500l-3 2 3 2" fill="none" stroke="#aaa"/><path d="M8 5.500h7" stroke="#111" stroke-width="2"/><path d="M16 5.500l-4-3v6z" fill="#111"/></symbol>
    <symbol id="pdcol" viewBox="0 0 18 18"><g fill="none" stroke-width="1.500"><path d="M1 3h16M4 1L1 3l3 2M14 1l3 2-3 2" stroke="#c02040"/><path d="M1 9h16M4 7L1 9l3 2M14 7l3 2-3 2" stroke="#1faa1f"/><path d="M1 15h16M4 13l-3 2 3 2M14 13l3 2-3 2" stroke="#1a1ac0"/></g></symbol>
    <symbol id="pdlt" viewBox="0 0 18 18"><g fill="none" stroke="#111" stroke-width="1.400"><path d="M1 3h16M4 1L1 3l3 2M14 1l3 2-3 2M4 7L1 9l3 2M14 7l3 2-3 2M4 13l-3 2 3 2M14 13l3 2-3 2"/><path d="M1 9h16" stroke-dasharray="5 2"/><path d="M1 15h16" stroke-dasharray="1 1"/></g></symbol>
    <symbol id="pdlw" viewBox="0 0 18 18"><g fill="none" stroke="#111" stroke-width="1.400"><path d="M1 3h16M4 1L1 3l3 2M14 1l3 2-3 2M4 6L1 9l3 3M14 6l3 3-3 3M4 12l-3 3 3 3M14 12l3 3-3 3"/><path d="M3 9h12" stroke-width="2.500"/><path d="M3 15h12" stroke-width="4"/></g></symbol>
    <symbol id="pe1" viewBox="0 0 18 18"><path d="M1.500 1v16" stroke="#111" stroke-width="2"/><path d="M17 2v15M3 5.500h13M6 3.500l-3 2 3 2M13 3.500l3 2-3 2" fill="none" stroke="#aaa"/></symbol>
    <symbol id="pe2" viewBox="0 0 18 18"><path d="M2 1v16" stroke="#111" stroke-width="2.400"/><path d="M3 3.500h14M6 1.500l-3 2 3 2M9 10.500h8M12 8.500l-3 2 3 2" fill="none" stroke="#111" stroke-width="1.300"/><path d="M8 7v10" stroke="#111" stroke-dasharray="2 1"/></symbol>
    <symbol id="pe3" viewBox="0 0 18 18"><path d="M17 1v16" stroke="#111" stroke-width="2"/><path d="M1 2v15M2 5.500h13M5 3.500l-3 2 3 2M12 3.500l3 2-3 2" fill="none" stroke="#aaa"/></symbol>
    <symbol id="pe4" viewBox="0 0 18 18"><path d="M16 1v16" stroke="#111" stroke-width="2.400"/><path d="M1 3.500h14M12 1.500l3 2-3 2M1 10.500h8M6 8.500l3 2-3 2" fill="none" stroke="#111" stroke-width="1.300"/><path d="M10 7v10" stroke="#111" stroke-dasharray="2 1"/></symbol>
    <symbol id="pe5" viewBox="0 0 18 18"><path d="M2 1v16" stroke="#111" stroke-width="2"/><path d="M3 3.500h14M6 1.500l-3 2 3 2M11 10.500h6M13 8.500l-3 2 3 2" fill="none" stroke="#111" stroke-width="1.300"/><path d="M8 7v10" stroke="#111" stroke-width="3.500"/></symbol>
    <symbol id="pe6" viewBox="0 0 18 18"><path d="M2 1v16" stroke="#d02020" stroke-width="2"/><path d="M3 3.500h14M6 1.500l-3 2 3 2" fill="none" stroke="#111" stroke-width="1.300"/></symbol>

    <!-- dialog -->
    <symbol id="plus" viewBox="0 0 18 18"><circle cx="9" cy="9" r="7.500" fill="#35a535" stroke="#1f7f1f"/><path d="M9 5v8M5 9h8" stroke="#fff" stroke-width="2.600"/></symbol>
    <symbol id="del" viewBox="0 0 18 18"><circle cx="9" cy="9" r="8" fill="#d6d6d6"/><circle cx="9" cy="9" r="6.500" fill="#cc3c46"/><path d="M6.500 6.500l5 5M11.500 6.500l-5 5" stroke="#fff" stroke-width="2"/></symbol>
    <symbol id="tick" viewBox="0 0 18 18"><path d="M1 9l4-1 2 3 9-7 1 1L7.500 16z" fill="#3fae2b" stroke="#2c7f1e" stroke-width=".6"/></symbol>
    <symbol id="cross" viewBox="0 0 18 18"><path d="M2 2l14 14M16 2L2 16" fill="none" stroke="#dd1e1e" stroke-width="3.200"/></symbol>
</svg>

<div class="flex h-screen min-w-[1320px] flex-col overflow-hidden border-b border-white">

    <!-- Title bar and menu -->
    <header class="flex h-[55px] shrink-0 border-b border-[#8c8c90] bg-linear-to-b from-[#ebecf0] to-[#e2e3e8]">
        <button class="w-[43px] shrink-0 pl-[2px]" aria-label="DraftSight"><svg class="size-[38px]"><use href="#orb"/></svg></button>
        <div class="flex min-w-0 flex-1 flex-col">
            <div class="grid h-7 grid-cols-[1fr_auto_1fr] items-center pl-1">
                <div class="flex items-center">
                    <div class="flex h-5 w-[159px] items-center border border-[#999] bg-white">
                        <select aria-label="ワークスペース" class="min-w-0 flex-1 appearance-none pl-[2px] font-['Open_Sans',sans-serif] text-[11px] outline-none"><option>Classic Default</option></select>
                        <span class="flex h-full w-4 items-center justify-center border-l border-[#aaa] bg-[#e1e1e1]"><svg class="size-[10px]"><use href="#chev"/></svg></span>
                    </div>
                    <div class="flex" data-icons="new open save print undo redo" data-size="compact"></div>
                    <svg class="ml-[2px] size-[10px]"><use href="#more"/></svg>
                </div>
                <h1 class="pr-14 font-['Open_Sans',sans-serif] text-xs">DraftSight - [NONAME_0.dwg*]</h1>
                <div class="flex justify-end gap-[26px] pr-[14px] text-[#666]">
                    <button aria-label="最小化"><svg class="size-[10px]"><use href="#min"/></svg></button>
                    <button aria-label="元に戻す"><svg class="size-[10px]"><use href="#restore"/></svg></button>
                    <button aria-label="閉じる"><svg class="size-[10px]"><use href="#x"/></svg></button>
                </div>
            </div>
            <div class="flex flex-1 items-center justify-between pl-[10px] pt-2">
                <nav class="flex gap-[17px] text-[11px] whitespace-nowrap text-[#a6a6aa]">
                    <a href="#">ファイル(F)</a><a href="#">編集(E)</a><a href="#">表示(V)</a><a href="#">挿入(I)</a><a href="#">形式(O)</a><a href="#">寸法(N)</a><a href="#">作成(D)</a><a href="#">修正(M)</a><a href="#">Toolbox</a><a href="#">ツール(T)</a><a href="#">ウィンドウ(W)</a><a href="#">ヘルプ(H)</a>
                </nav>
                <div class="flex gap-2 pr-[5px] pb-2">
                    <button aria-label="図面を最小化"><svg class="size-[10px]"><use href="#min"/></svg></button>
                    <button aria-label="図面を元に戻す"><svg class="size-[10px]"><use href="#restore"/></svg></button>
                    <button aria-label="図面を閉じる"><svg class="size-[10px]"><use href="#x"/></svg></button>
                </div>
            </div>
        </div>
    </header>

    <!-- Modify toolbar -->
    <div class="flex h-[30px] shrink-0 items-center border-b border-[#a0a0a0] pl-[2px]">
        <div class="flex" data-icons="cut copy paste pastesp note brush"></div>
        <span class="mx-[2px] h-6 w-px bg-[#888]"></span>
        <div class="flex" data-icons="props"></div>
        <span class="mx-[2px] h-full w-px bg-[#999]"></span>
        <div class="flex" data-icons="erase dedup copyent mirror move offset rotate scale stretch chamfer fillet pedit pedit2 join extend trim hatchedit"></div>
        <span class="mx-px h-full w-px bg-[#999]"></span>
        <div class="flex" data-icons="tstyle dimstyle"></div>
        <span class="mx-[2px] h-full w-px bg-[#999]"></span>
        <div class="flex" data-icons="tape area sheet"></div>
        <div class="flex h-5 w-[133px] items-center border border-[#999] bg-white pl-[6px]">
            <svg class="size-[10px] shrink-0"><use href="#bigA"/></svg>
            <select aria-label="文字スタイル" class="min-w-0 flex-1 appearance-none pl-[5px] outline-none"><option>文字設定-1倍</option></select>
            <span class="flex h-full w-4 items-center justify-center border-l border-[#aaa] bg-[#e1e1e1]"><svg class="size-[10px]"><use href="#chev"/></svg></span>
        </div>
        <div class="flex h-5 w-[131px] items-center border border-l-0 border-[#999] bg-white pl-1">
            <svg class="size-[13px] shrink-0"><use href="#dimred"/></svg>
            <select aria-label="寸法スタイル" class="min-w-0 flex-1 appearance-none pl-[3px] outline-none"><option>寸法設定-1倍</option></select>
            <span class="flex h-full w-4 items-center justify-center border-l border-[#aaa] bg-[#e1e1e1]"><svg class="size-[10px]"><use href="#chev"/></svg></span>
        </div>
    </div>

    <!-- Layer / dimension toolbar -->
    <div class="flex h-[30px] shrink-0 items-center border-b border-[#a0a0a0] pl-[2px]">
        <div class="flex" data-icons="layer"></div>
        <div class="flex h-5 w-[300px] items-center border border-[#999] bg-white pl-[2px]">
            <svg class="size-[18px]"><use href="#on"/></svg><svg class="ml-[2px] size-[18px]"><use href="#thaw"/></svg><svg class="ml-[2px] size-[18px]"><use href="#lock"/></svg><svg class="ml-[2px] size-[18px]"><use href="#ring"/></svg>
            <select aria-label="画層" class="min-w-0 flex-1 appearance-none pl-[6px] outline-none"><option>0</option></select>
            <span class="flex h-full w-4 items-center justify-center border-l border-[#aaa] bg-[#e1e1e1]"><svg class="size-[10px]"><use href="#chev"/></svg></span>
        </div>
        <div class="flex" data-icons="layerst"></div>
        <span class="mx-px h-full w-px bg-[#999]"></span>
        <div class="flex h-5 w-[132px] items-center border border-[#999] bg-white pl-[2px]">
            <svg class="size-[18px]"><use href="#grey"/></svg>
            <select aria-label="線色" class="min-w-0 flex-1 appearance-none pl-px outline-none"><option>Color 8</option></select>
            <span class="flex h-full w-4 items-center justify-center border-l border-[#aaa] bg-[#e1e1e1]"><svg class="size-[10px]"><use href="#chev"/></svg></span>
        </div>
        <span class="mx-[2px] h-5 w-px bg-[#888]"></span>
        <div class="flex h-5 w-[133px] items-center border border-[#999] bg-white pl-[2px]">
            <select aria-label="線種" class="w-[34px] appearance-none outline-none"><option>実線2</option></select>
            <span class="mt-[10px] h-px w-14 bg-black"></span>
            <span class="ml-auto flex h-full w-4 items-center justify-center border-l border-[#aaa] bg-[#e1e1e1]"><svg class="size-[10px]"><use href="#chev"/></svg></span>
        </div>
        <span class="mx-[2px] h-5 w-px bg-[#888]"></span>
        <div class="ml-px flex h-5 w-[133px] items-center border border-[#999] bg-white pl-[3px]">
            <span class="h-px w-8 bg-black"></span>
            <select aria-label="線の太さ" class="min-w-0 flex-1 appearance-none pl-[3px] outline-none"><option>0.09 mm</option></select>
            <span class="flex h-full w-4 items-center justify-center border-l border-[#aaa] bg-[#e1e1e1]"><svg class="size-[10px]"><use href="#chev"/></svg></span>
        </div>
        <span class="mr-[2px] h-full w-px bg-[#999]"></span>
        <div class="flex" data-icons="dsmart dalign dlin dbase dcont djog"></div>
        <span class="mr-[3px] ml-[2px] h-6 w-px bg-[#888]"></span>
        <div class="flex" data-icons="dcen ddia drad"></div>
        <span class="mr-[3px] ml-[2px] h-6 w-px bg-[#888]"></span>
        <div class="flex" data-icons="dang darc dord"></div>
        <span class="mr-[3px] ml-[2px] h-6 w-px bg-[#888]"></span>
        <div class="flex" data-icons="dlead dtol"></div>
        <span class="mr-[3px] ml-[2px] h-6 w-px bg-[#888]"></span>
        <div class="flex" data-icons="dedit1 dedit2 dedit3"></div>
        <span class="mr-[3px] ml-[2px] h-6 w-px bg-[#888]"></span>
        <div class="flex" data-icons="dimstyle"></div>
    </div>

    <main class="flex min-h-0 flex-1">
        <!-- Property palette -->
        <aside class="flex w-[247px] shrink-0 flex-col pt-px">
            <div class="flex h-[21px] items-center justify-between border border-[#93a1bd] bg-[#dde3fc] pr-[6px] pl-[2px]">
                <h2 class="text-[11px] font-bold">プロパティ</h2>
                <button aria-label="パレットを閉じる"><svg class="size-[9px]"><use href="#x"/></svg></button>
            </div>
            <div class="mx-[11px] mt-3 flex h-5 shrink-0 items-center border border-[#999] bg-white">
                <select aria-label="選択エンティティ" class="min-w-0 flex-1 appearance-none pl-[2px] outline-none"><option>長さ寸法 (1)</option></select>
                <span class="flex h-full w-4 items-center justify-center border-l border-[#aaa] bg-[#e1e1e1]"><svg class="size-[10px]"><use href="#chev"/></svg></span>
            </div>
            <div class="mt-[7px] ml-3 flex gap-2" data-icons="shapes cursor selwin quick help" data-size="boxed"></div>
            <div class="mx-[11px] mt-[6px] mb-3 flex min-h-0 flex-1 overflow-hidden border border-[#8a8f99]">
                <div id="props-list" class="-mt-2 ml-[9px] w-[187px] border-l border-[#dcdcdc]"></div>
                <div class="ml-auto flex w-[18px] flex-col items-center justify-between border-l border-[#fafafa] py-1">
                    <svg class="size-[10px] rotate-180"><use href="#chev"/></svg>
                    <svg class="size-[10px]"><use href="#chev"/></svg>
                </div>
            </div>
        </aside>

        <!-- Document -->
        <section class="ml-[3px] flex min-w-0 flex-1 flex-col border-l border-[#808088]">
            <div class="h-[30px] shrink-0 border-t border-r border-b-2 border-t-[#8c8c90] border-r-[#8c8c90] border-b-[#8a8a90] bg-white">
                <div class="flex h-6 bg-[#ececf2] text-[11px]">
                    <div class="flex w-[181px] items-center justify-between bg-white pr-4 pl-[37px]">
                        <a href="#">NONAME_0.dwg*</a><button aria-label="NONAME_0.dwgを閉じる" class="text-[#333]"><svg class="size-[11px]"><use href="#x"/></svg></button>
                    </div>
                    <div class="flex w-[177px] items-center justify-between border-b border-l border-[#8c8c90] bg-[#f0f0f0] pr-[13px] pl-[33px]">
                        <a href="#">CAP_M6-25.dwg*</a><button aria-label="CAP_M6-25.dwgを閉じる" class="text-[#333]"><svg class="size-[11px]"><use href="#x"/></svg></button>
                    </div>
                    <button class="flex w-[27px] items-center justify-center border border-t-0 border-[#999] bg-[#e1e1e1] text-[#444]" aria-label="新規タブ"><svg class="size-[14px]" viewBox="0 0 14 14"><path d="M7 1v12M1 7h12" stroke="currentColor" stroke-width="2"/></svg></button>
                    <div class="flex-1 border-b border-[#8c8c90]"></div>
                </div>
            </div>

            <div class="flex min-h-0 flex-1 pr-px">
                <div class="min-w-0 flex-1 overflow-hidden bg-white pt-[10px]">
                    <div class="flex gap-[13px] whitespace-nowrap">
                        <div class="flex h-[30px] items-center border border-[#d8d8d8] bg-[#f0f0f0]">
                            <span class="w-[50px] pl-[7px] text-[11px]">ファイル</span>
                            <div class="flex" data-icons="new open save saveas redo undo"></div>
                            <button class="mb-3 w-[11px] text-[#333]" aria-label="閉じる"><svg class="ml-1 size-[6px]"><use href="#x"/></svg></button>
                        </div>
                        <div class="ml-px flex h-[30px] items-center border border-[#d8d8d8] bg-[#f0f0f0]">
                            <span class="w-10 pl-[7px]">印刷</span>
                            <div class="flex" data-icons="print printcfg preview layout1 layout2 viewbox pan"></div>
                            <button class="mb-3 w-[11px] text-[#333]" aria-label="閉じる"><svg class="ml-1 size-[6px]"><use href="#x"/></svg></button>
                        </div>
                        <div class="flex h-[30px] items-center border border-[#d8d8d8] bg-[#f0f0f0]">
                            <span class="w-[52px] pl-[7px]">線選択</span>
                            <div class="flex" data-linetypes></div>
                            <button class="mb-3 w-[11px] text-[#333]" aria-label="閉じる"><svg class="ml-1 size-[6px]"><use href="#x"/></svg></button>
                        </div>
                        <div class="flex h-[30px] items-center border border-[#d8d8d8] bg-[#f0f0f0]">
                            <span class="w-[52px] pl-[7px]">線変更</span>
                            <div class="flex" data-linetypes></div>
                            <button class="mb-3 w-[11px] text-[#333]" aria-label="閉じる"><svg class="ml-1 size-[6px]"><use href="#x"/></svg></button>
                        </div>
                    </div>

                    <!-- Drawing sheet -->
                    <svg class="mt-3 ml-[47px] h-[456px] w-[644px]" viewBox="298 197 644 456" fill="none" shape-rendering="crispEdges">
                        <path d="M300 199h640v452H300z" stroke="#808080" stroke-width="4"/>
                        <path d="M309.500 209.500v432M929.500 209.500v432" stroke="#7a3038"/>
                        <path d="M309 209.500h621M309 641.500h621" stroke="#c01818"/>
                        <!-- title block -->
                        <path d="M310 554.500h620M530 576.500h172M530 598.500h172M530 619.500h86M702 583.500h228M702 612.500h228" stroke="#d01414"/>
                        <path d="M374.500 554v87M530.500 554v87M616.500 554v87M702.500 554v87" stroke="#f00000"/>
                        <path d="M331.500 554v87M443.500 554v87M735.500 554v87" stroke="#604040"/>
                        <!-- front view -->
                        <path d="M500 320.500h72M571.500 319v124M500 442.500h72M500 379.500h67M500 400.500h67M566.500 378v25" stroke="#808080"/>
                        <path d="M500 390.500h80" stroke="#808080" stroke-dasharray="12 2 3 2"/>
                        <path d="M500 377.500h66M500 403.500h66M571.500 383v15" stroke="#000"/>
                        <path d="M573 377.500h28M573 403.500h28" stroke="#808080" stroke-dasharray="4 2"/>
                        <path d="M571 320.500l-6-1.500v3zM571 442.500l-6-1.500v3z" fill="#666"/>
                        <g fill="#0000f0" stroke="#555588">
                            <path d="M561.500 372.500h10v10h-10zM561.500 398.500h10v10h-10zM600.500 372.500h10v10h-10zM600.500 398.500h10v10h-10zM596.500 385.500h9v10h-9z"/>
                            <circle cx="605" cy="383" r="4.500" shape-rendering="auto"/><circle cx="605" cy="398" r="4.500" shape-rendering="auto"/>
                        </g>
                        <!-- detail view -->
                        <path d="M722.500 235.500h175v199h-175z" stroke="#808080"/>
                        <path d="M723 314.500h76M723 357.500h76M795.500 311v50" stroke="#808080"/>
                        <path d="M723 310.500h73M723 361.500h73M803.500 318v36" stroke="#000"/>
                        <path d="M796 310.500l7.500 8M803.500 353.500l-7.500 8" stroke="#000" shape-rendering="auto"/>
                        <path d="M723 336.500h98" stroke="#808080" stroke-dasharray="14 2 3 2"/>
                        <path d="M797 310.500h74.500v51H797" stroke="#808080" stroke-dasharray="4 2"/>
                        <path d="M801 313l33-33.500h15" stroke="#777" shape-rendering="auto"/>
                        <path d="M799 315l4-8 4 3z" fill="#888" shape-rendering="auto"/>
                        <path d="M871.500 311l-2 6h4zM871.500 361l-2-6h4z" fill="#999"/>
                        <path d="M866 333h3v2h2v3h-5v-2h-1v-2z" fill="#10dcdc"/>
                        <path d="M772.500 358v25M773 383.500h19M771.500 382.500h3v3h-3zM773 361l3 4M791 385l2-3M797 381v5" stroke="#000"/>
                        <g fill="#000" font-weight="bold" font-size="9" shape-rendering="auto">
                            <text x="528" y="442" fill="#10dcdc" font-size="8">10</text>
                            <text x="854" y="428" font-size="13">S=4/1</text>
                            <text x="531" y="564">材料</text><text x="531" y="585">表面処理</text><text x="531" y="607">熱処理</text><text x="531" y="628">作成日</text>
                            <text x="660" y="569" font-size="8" text-anchor="middle">指示無き角部は0.2C</text>
                            <text x="663" y="591" font-size="12" text-anchor="middle">第三角法</text>
                            <text x="660" y="622" font-size="9" text-anchor="middle">〇〇〇〇株式会社</text>
                            <text x="703" y="564">個数</text><text x="702" y="593">/台数</text><text x="703" y="622">尺度</text>
                            <text x="736" y="564">機械名/ユニット名</text><text x="736" y="593">名称</text><text x="736" y="622">図番</text>
                            <g font-size="17"><text x="777" y="580">あいうえお</text><text x="777" y="609">あいうえお</text><text x="777" y="638">あいうえお</text></g>
                        </g>
                    </svg>
                </div>
                <div class="flex w-3 flex-col items-center justify-between py-1">
                    <svg class="size-[10px] rotate-180"><use href="#chev"/></svg>
                    <span class="h-[13px] w-full bg-[#cdcdcd]"></span>
                    <svg class="size-[10px]"><use href="#chev"/></svg>
                </div>
            </div>

            <div class="flex h-[14px] shrink-0">
                <div class="flex w-[720px] text-[11px] leading-3">
                    <button class="relative h-[13px] w-[52px]"><svg class="absolute inset-0 h-[13px] w-full overflow-visible" viewBox="0 0 52 13"><path d="M0 0c5 0 4 12 9 12.500h34c5 0 4-12 9-12.500" fill="#f0f0f0" stroke="#222"/></svg><span class="relative">モデル</span></button>
                    <button class="relative h-[13px] w-[60px]"><svg class="absolute inset-0 h-[13px] w-full overflow-visible" viewBox="0 0 60 13"><path d="M0 0c5 0 4 12 9 12.500h42c5 0 4-12 9-12.500" fill="#f0f0f0" stroke="#222"/></svg><span class="relative">Sheet1</span></button>
                    <button class="relative h-[13px] w-[58px]"><svg class="absolute inset-0 h-[13px] w-full overflow-visible" viewBox="0 0 58 13"><path d="M0 0c5 0 4 12 9 12.500h40c5 0 4-12 9-12.500" fill="#f0f0f0" stroke="#222"/></svg><span class="relative">シート1</span></button>
                    <button class="relative h-[13px] w-[58px]"><svg class="absolute inset-0 h-[13px] w-full overflow-visible" viewBox="0 0 58 13"><path d="M0 0c5 0 4 12 9 12.500h40c5 0 4-12 9-12.500" fill="#fff" stroke="#222"/></svg><span class="relative">シート2</span></button>
                </div>
                <div class="flex flex-1 items-center justify-between pr-4 pl-[5px]">
                    <svg class="size-[10px] rotate-90"><use href="#chev"/></svg>
                    <span class="h-[13px] w-[13px] bg-[#cdcdcd]"></span>
                    <svg class="size-[10px] -rotate-90"><use href="#chev"/></svg>
                </div>
            </div>
        </section>

        <!-- Draw toolbar -->
        <div class="mb-px ml-px flex w-[30px] shrink-0 flex-col items-center border-b border-[#a0a0a0] pt-[2px]" data-icons="line xline poly rect pline arc circ ell ellarc spline hatch addnote editnote note bomb mtext stext" data-size="tall"></div>
    </main>

    <!-- Status bar -->
    <footer class="flex h-7 shrink-0 items-center whitespace-nowrap text-[11px]">
        <span class="w-[489px] pl-[2px] font-['Open_Sans',sans-serif]">DraftSight 2016 x64</span>
        <div class="flex h-5 items-stretch gap-2">
            <button class="w-[42px] border border-[#adadad] bg-[#e1e1e1] text-[10px]">スナップ</button>
            <button class="w-[37px] border border-[#adadad] bg-[#e1e1e1] text-[10px]">グリッド</button>
            <button class="w-[35px] border border-[#adadad] bg-[#e1e1e1] text-xs">直交</button>
            <button class="ml-[2px] w-12 border border-[#1f4e79] bg-[#cce4f7] text-xs">円形状</button>
            <button class="w-12 border border-[#1f4e79] bg-[#cce4f7] text-[10px]">Eスナップ</button>
            <button class="flex w-[41px] justify-center border border-[#adadad] bg-[#e1e1e1] text-[10px] leading-[18px]">Eトラック</button>
            <button class="ml-[2px] flex w-[58px] items-center justify-between border border-[#adadad] bg-[#e1e1e1] pr-2 pl-1">注釈 <svg class="size-2" viewBox="0 0 8 8"><path d="M0 2h8L4 6z"/></svg></button>
            <span class="self-center font-['Open_Sans',sans-serif]">(2:1)</span>
            <span class="self-center font-['Open_Sans',sans-serif]">(764.27,-577.42,0)</span>
        </div>
    </footer>
</div>

<!-- Scale list dialog -->
<div role="dialog" aria-label="注釈エンティティ尺度一覧" class="absolute top-[238px] left-[152px] w-[377px] border border-[#1883d7] bg-[#f0f0f0] pb-3 shadow-[3px_4px_14px_rgba(0,0,0,0.4)]">
    <div class="flex h-[31px] items-center bg-white pr-[10px] pl-2">
        <svg class="size-[17px]"><use href="#ds16"/></svg>
        <h2 class="ml-[5px] text-[11px]">注釈エンティティ尺度一覧</h2>
        <button class="ml-auto" aria-label="閉じる"><svg class="size-[11px]" viewBox="0 0 11 11"><path d="M.5.5l10 10M10.500.5l-10 10" stroke="#222"/></svg></button>
    </div>
    <fieldset class="mx-[11px] mt-[7px] border border-[#dcdcdc] px-[9px] pb-[9px]">
        <legend class="px-px text-[11px] leading-[18px]">エンティティ尺度一覧</legend>
        <div class="mt-[7px] flex gap-[7px]">
            <ul class="h-[191px] w-[252px] border border-[#828790] bg-white p-px text-[11px] leading-4">
                <li class="bg-[#0078d7] pl-[3px] text-[#cfe6fb]">2:1</li>
                <li class="pl-[3px]">4:1</li>
            </ul>
            <div class="flex w-[74px] flex-col gap-2">
                <button class="flex h-[22px] items-center justify-center gap-1 border border-[#adadad] bg-[#e1e1e1] text-[11px] whitespace-nowrap"><svg class="size-4"><use href="#plus"/></svg>追加(A)...</button>
                <button class="flex h-[22px] items-center justify-center gap-1 border border-[#adadad] bg-[#e1e1e1] text-[11px] whitespace-nowrap"><svg class="size-4"><use href="#del"/></svg>削除(D)</button>
            </div>
        </div>
        <fieldset class="mt-[14px] w-[252px] border border-[#dcdcdc] px-[9px] pb-[6px]">
            <legend class="px-px leading-[18px]">尺度一覧表示</legend>
            <label class="mt-[3px] flex h-[22px] items-center gap-[6px]"><input type="radio" name="scales" checked class="size-[13px] appearance-none rounded-full border border-[#333] bg-[#333] bg-clip-content p-[2px]">全尺度を表示(S)</label>
            <label class="flex h-[22px] items-center gap-[6px]"><input type="radio" name="scales" class="size-[13px] appearance-none rounded-full border border-[#333] bg-white">共通尺度のみ表示(C)</label>
        </fieldset>
    </fieldset>
    <div class="mt-2 flex h-[22px] justify-end gap-2 pr-3 text-[11px] whitespace-nowrap">
        <button class="flex w-[73px] items-center justify-center gap-1 border-2 border-[#1a78d0] bg-[#e1e1e1]"><svg class="size-4"><use href="#tick"/></svg>OK</button>
        <button class="flex w-[73px] items-center justify-center gap-px border border-[#adadad] bg-[#e1e1e1]"><svg class="size-4 shrink-0"><use href="#cross"/></svg>キャンセル</button>
        <button class="flex w-[73px] items-center justify-center gap-1 border border-[#adadad] bg-[#e1e1e1]"><svg class="size-4"><use href="#help"/></svg>ヘルプ</button>
    </div>
</div>

<!-- Callout frames -->
<div class="pointer-events-none absolute top-[316px] left-[168px] h-[23px] w-[75px] rounded-md border-4 border-[#b40808]"></div>
<div class="pointer-events-none absolute top-[411px] left-[19px] h-[31px] w-[130px] rounded-lg border-[5px] border-[#b40808]"></div>

<!-- Command window -->
<div class="absolute right-[53px] bottom-[58px] w-[346px] border border-[#a0a0a0] bg-white shadow-[2px_3px_12px_rgba(0,0,0,0.35)]">
    <div class="flex h-[30px] items-center pr-[10px] pl-2">
        <svg class="size-[17px]"><use href="#ds16"/></svg>
        <h2 class="ml-[5px] text-[11px] text-[#999]">コマンド ウィンドウ</h2>
        <button class="ml-auto" aria-label="閉じる"><svg class="size-[11px]" viewBox="0 0 11 11"><path d="M.5.5l10 10M10.500.5l-10 10" stroke="#999"/></svg></button>
    </div>
    <div class="flex h-[164px] border border-[#828790]">
        <div class="-mt-px min-w-0 flex-1 pl-1 text-[13px] leading-4 whitespace-nowrap">
            <p class="font-bold">アクティブ化するビューポート番号を指定» <span class="font-normal text-[#a55a1a]">1</span></p>
            <p>: ._MAINSELECT<span class="text-xs leading-4">反対側のコーナーを指定:«キャンセル»</span></p>
            <p>: _ACTIVATEVIEWPORT</p>
            <p><span class="text-xs leading-4">デフォルト</span>: <span class="text-[#e07020]">1</span></p>
            <p class="font-bold">アクティブ化するビューポート番号を指定» <span class="font-normal">4</span></p>
            <p>: ._MAINSELECT</p>
            <p>: ._MAINSELECT</p>
            <p>: <span class="text-xs leading-4">«キャンセル»</span></p>
            <p>: ._MAINSELECT<span class="text-xs leading-4">反対側のコーナーを指定:</span></p>
            <p>: ._MAINSELECT</p>
        </div>
        <div class="flex w-4 flex-col items-center bg-[#f0f0f0] py-1">
            <svg class="size-[10px] rotate-180"><use href="#chev"/></svg>
            <span class="mt-auto h-[10px] w-full bg-[#cdcdcd]"></span>
            <svg class="mt-1 size-[10px]"><use href="#chev"/></svg>
        </div>
    </div>
    <label class="flex h-4 items-center pl-1 text-[13px] leading-4 text-[#2a6a9a]">:<input aria-label="コマンド" class="ml-1 min-w-0 flex-1 outline-none"></label>
</div>

<script>
    const icon = (id, cls) => `<svg class="${cls}"><use href="#${id}"/></svg>`;

    const buttonSizes = {
        compact: 'flex h-5 w-[23px] items-center justify-center',
        boxed: 'flex size-[21px] items-center justify-center border border-[#adadad] bg-[#e1e1e1]',
        tall: 'flex h-[26px] w-[28px] items-center justify-center',
        normal: 'flex h-6 w-[27px] items-center justify-center'
    };
    document.querySelectorAll('[data-icons]').forEach(bar => {
        const cls = buttonSizes[bar.dataset.size || 'normal'];
        bar.innerHTML = bar.dataset.icons.split(' ')
            .map(id => `<button class="${cls}" aria-label="${id}">${icon(id, 'size-[17px]')}</button>`).join('');
    });

    const linetypes = [
        ['外', 'text-[#00e000]'], ['中', 'text-[#404040]'], ['隠', 'text-[#0000b8]'], ['想', 'text-[#ffff00]'],
        ['細', 'text-[#404040]'], ['層', 'text-white'], ['寸', 'text-[#404040]'], ['枠', 'text-[#ff0000]']
    ];
    document.querySelectorAll('[data-linetypes]').forEach(bar => {
        bar.innerHTML = linetypes
            .map(([ch, color]) => `<button class="w-[27px] text-[15px] leading-6 font-black ${color}">${ch}</button>`).join('');
    });

    // Property rows: [icon, value, extra]
    const rows = [
        ['pcolor', 'Color 8', 'color'], ['pltscale', '1', 'input'], ['plw', '0.09 mm', 'weight'], ['plt', '実線2', 'type'],
        ['ptrans', 'ByLayer', 'input'], ['pps', '', 'off'], ['plink', 'はい', 'sel'],
        'その他',
        ['dimstyle', '寸法設定-1倍', 'style'], ['bigA', 'はい', ''], ['pscale', '2:1', 'sel'],
        '線分&amp;矢印',
        ['pd1', 'オン', ''], ['pd2', 'オン', ''], ['pdcol', 'Color 8', 'color'], ['pdlt', '実線2', ''], ['pdlw', '0.09 mm', 'weight'],
        ['pe1', 'オン', ''], ['pe2', '実線2', ''], ['pe3', 'オン', ''], ['pe4', '実線2', ''], ['pe5', '0.09 mm', 'weight'], ['pe6', 'Color 8', 'color']
    ];
    const arrow = '<span class="flex h-full w-4 shrink-0 items-center justify-center border-l border-[#aaa] bg-[#e1e1e1]">' + icon('chev', 'size-[10px]') + '</span>';
    const lead = {
        color: icon('grey', 'ml-[2px] size-[18px] shrink-0'),
        style: icon('dimred', 'mr-[3px] ml-1 size-[13px] shrink-0'),
        weight: '<span class="ml-[3px] h-px w-8 shrink-0 bg-black"></span>'
    };
    document.getElementById('props-list').innerHTML = rows.map(row => {
        if (typeof row === 'string') {
            return `<h3 class="mb-[3px] h-[18px] border border-[#93a1bd] bg-[#dde3fc] pl-[5px] text-[11px] leading-4 font-bold">${row}</h3>`;
        }
        const [id, value, kind] = row;
        const bg = kind === 'sel' ? 'bg-[#b4cfec]' : kind === 'off' ? 'bg-[#f0f0f0]' : 'bg-white';
        const height = kind === 'style' ? 'h-[22px]' : 'h-5';
        const field = kind === 'input'
            ? `<input aria-label="${id}" value="${value}" class="min-w-0 flex-1 pl-[2px] outline-none">`
            : `<select aria-label="${id}" class="min-w-0 flex-1 appearance-none pl-[2px] outline-none"><option>${value}</option></select>`;
        const line = kind === 'type' ? '<span class="mt-[10px] mr-9 h-px w-14 bg-black"></span>' : '';
        return `<div class="mb-[2px] flex ${height}">
            <span class="flex w-[39px] shrink-0 items-center justify-center">${icon(id, 'size-[18px]')}</span>
            <div class="flex w-[147px] items-center border border-[#a0a0a0] ${bg}">${lead[kind] || ''}${field}${line}${kind === 'input' ? '' : arrow}</div>
        </div>`;
    }).join('');
</script>
</body>
</html>
